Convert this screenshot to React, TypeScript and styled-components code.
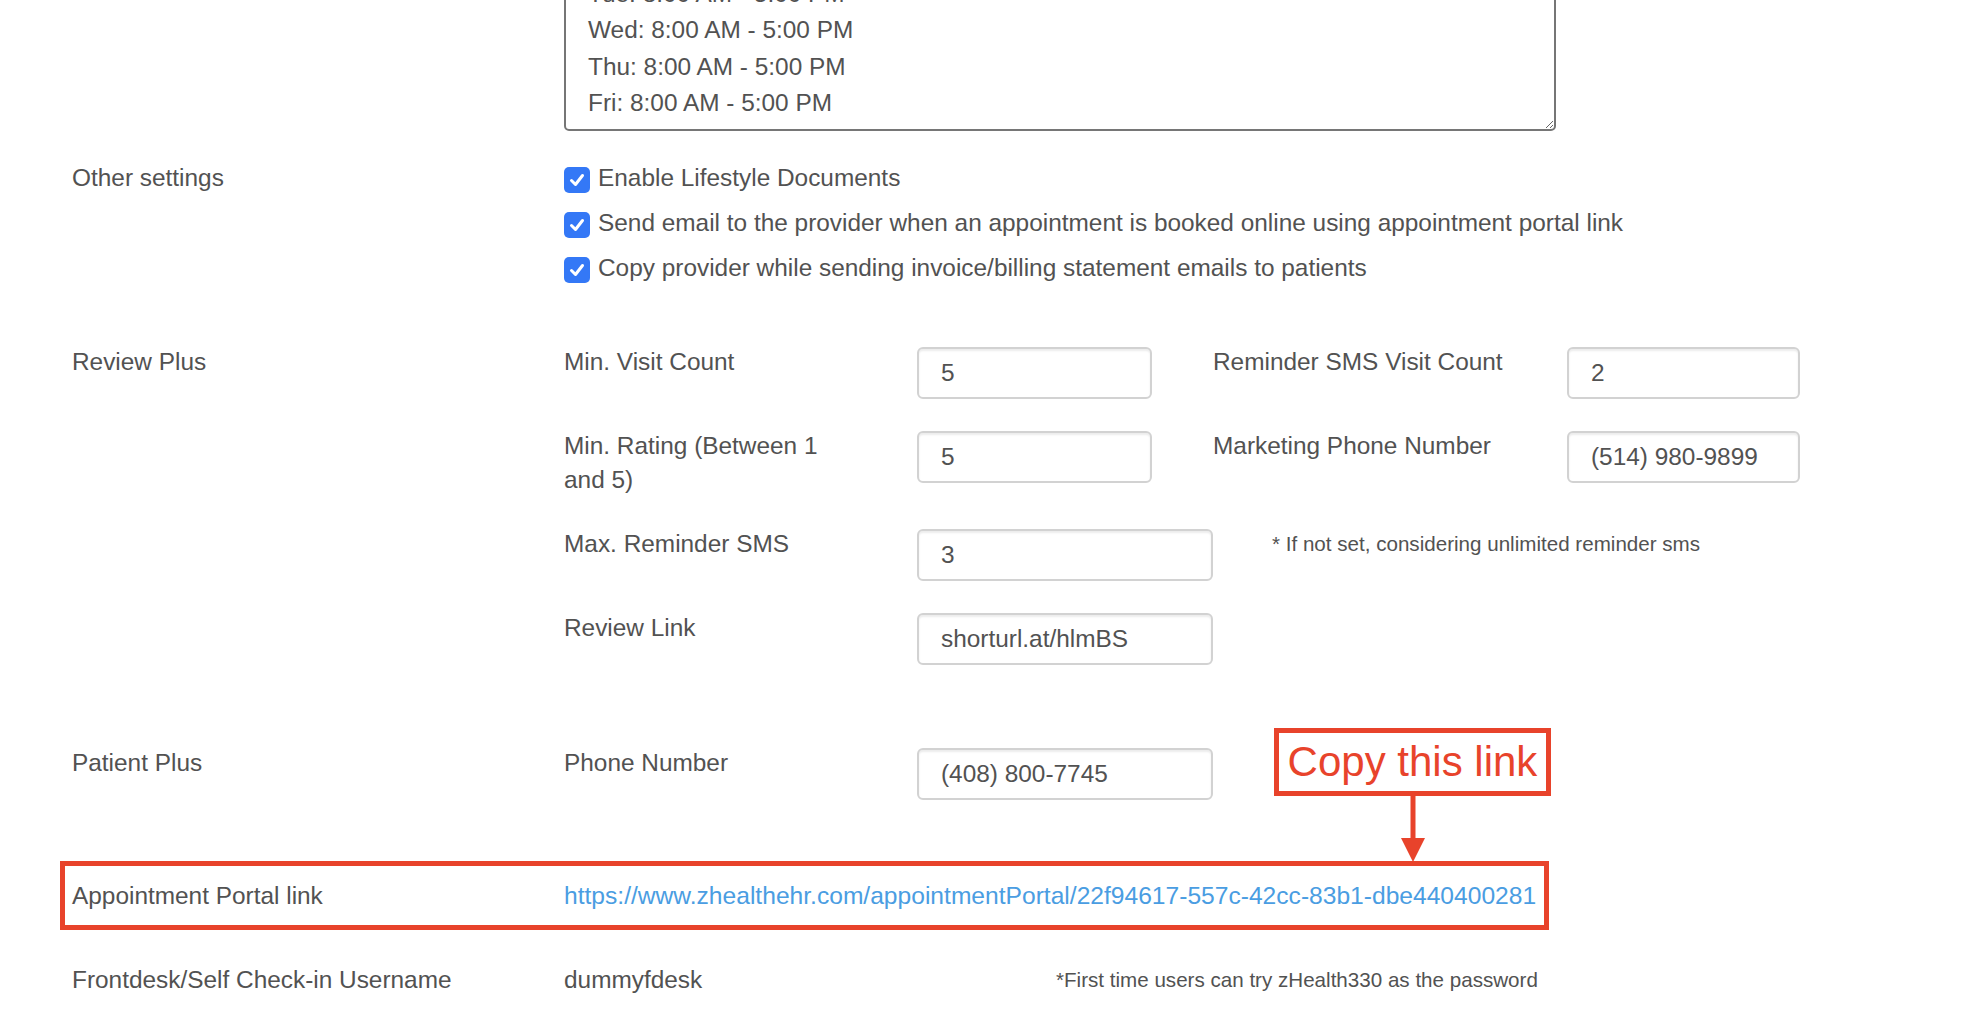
import styled, { createGlobalStyle } from "styled-components";

const RED = "#e8432b";
const TEXT = "#525252";

const GlobalStyle = createGlobalStyle`
  html, body {
    margin: 0;
    padding: 0;
    background: #ffffff;
  }
  body {
    font-family: "Liberation Sans", Arial, Helvetica, sans-serif;
    color: ${TEXT};
    overflow: hidden;
  }
`;

const Page = styled.main`
  display: flex;
  flex-direction: column;
  margin-top: -76px;
  padding-left: 72px;
`;

const Row = styled.section<{ $top?: number }>`
  display: grid;
  grid-template-columns: 492px 1fr;
  align-items: start;
  margin-top: ${(p) => p.$top ?? 0}px;
`;

const SectionLabel = styled.div`
  font-size: 24.4px;
  line-height: 34px;
  color: ${TEXT};
`;

const Hours = styled.textarea`
  box-sizing: border-box;
  display: block;
  width: 992px;
  height: 206.5px;
  padding: 13px 22px 7px;
  border: 2px solid #767676;
  border-radius: 5px;
  font-family: "Liberation Sans", Arial, sans-serif;
  font-size: 24.4px;
  line-height: 36.5px;
  color: ${TEXT};
  background: #fff;
  resize: vertical;
  overflow: hidden;
  outline: none;
`;

const CheckList = styled.div`
  display: flex;
  flex-direction: column;
  gap: 11px;
`;

const CheckItem = styled.label`
  display: flex;
  align-items: center;
  gap: 8px;
  font-size: 24.4px;
  line-height: 34px;
  color: ${TEXT};
  white-space: nowrap;
`;

const CheckBox = styled.span`
  display: inline-flex;
  align-items: center;
  justify-content: center;
  flex: none;
  width: 26px;
  height: 26px;
  margin-top: 4px;
  border-radius: 5px;
  background: #3478f6;
`;

const FieldGrid = styled.div`
  display: grid;
  grid-template-columns: 353px 296px 354px 233px;
  row-gap: 30px;
  align-items: start;
`;

const FieldLabel = styled.div`
  padding-right: 62px;
  font-size: 24.4px;
  line-height: 34px;
  color: ${TEXT};
`;

const Input = styled.input<{ $w: number }>`
  box-sizing: border-box;
  width: ${(p) => p.$w}px;
  height: 52px;
  margin: 2px 0 0;
  padding: 0 20px 0 22px;
  border: 2px solid #d2d2d2;
  border-radius: 6px;
  box-shadow: inset 0 2px 2px rgba(0, 0, 0, 0.08);
  font-family: "Liberation Sans", Arial, sans-serif;
  font-size: 24.4px;
  color: ${TEXT};
  background: #fff;
  outline: none;
`;

const Note = styled.div`
  grid-column: span 2;
  padding-left: 59px;
  font-size: 20.6px;
  line-height: 34px;
  color: ${TEXT};
  white-space: nowrap;
`;

const Annotated = styled.div`
  position: relative;
  margin-top: 81px;
`;

const Callout = styled.div`
  position: absolute;
  left: 1202px;
  top: -18px;
  z-index: 2;
  display: flex;
  flex-direction: column;
  align-items: center;
  width: 277px;
`;

const CalloutBox = styled.div`
  box-sizing: border-box;
  width: 277px;
  height: 68px;
  border: 5px solid ${RED};
  background: #fff;
  color: ${RED};
  font-size: 42px;
  line-height: 58px;
  text-align: center;
  white-space: nowrap;
`;

const HighlightRow = styled(Row)`
  box-sizing: border-box;
  width: 1489px;
  margin-left: -12px;
  padding: 13px 0 12px 7px;
  border: 5px solid ${RED};
`;

const PortalLink = styled.a`
  font-size: 24.6px;
  line-height: 34px;
  color: #4a9de2;
  text-decoration: none;
  white-space: nowrap;
`;

const ValueLine = styled.div`
  display: grid;
  grid-template-columns: 492px auto;
  align-items: start;
`;

const Value = styled.div`
  font-size: 24.4px;
  line-height: 34px;
  color: ${TEXT};
`;

const FootNote = styled.div`
  font-size: 20.6px;
  line-height: 34px;
  color: ${TEXT};
  white-space: nowrap;
`;

const hours = [
  "Mon: 8:00 AM - 5:00 PM",
  "Tue: 8:00 AM - 5:00 PM",
  "Wed: 8:00 AM - 5:00 PM",
  "Thu: 8:00 AM - 5:00 PM",
  "Fri: 8:00 AM - 5:00 PM",
].join("\n");

const settings = [
  "Enable Lifestyle Documents",
  "Send email to the provider when an appointment is booked online using appointment portal link",
  "Copy provider while sending invoice/billing statement emails to patients",
];

function Tick() {
  return (
    <svg width="18" height="18" viewBox="0 0 18 18">
      <polyline
        points="3.5,9.5 7.5,13.5 14.5,4.5"
        fill="none"
        stroke="#fff"
        strokeWidth="3"
        strokeLinecap="round"
        strokeLinejoin="round"
      />
    </svg>
  );
}

function Arrow() {
  return (
    <svg width="24" height="66" viewBox="0 0 24 66">
      <line x1="12" y1="0" x2="12" y2="46" stroke={RED} strokeWidth="5" />
      <polygon points="0,42 24,42 12,66" fill={RED} />
    </svg>
  );
}

export default function App() {
  return (
    <>
      <GlobalStyle />
      <Page>
        <Row>
          <SectionLabel />
          <Hours readOnly defaultValue={hours} />
        </Row>

        <Row $top={30}>
          <SectionLabel>Other settings</SectionLabel>
          <CheckList>
            {settings.map((s) => (
              <CheckItem key={s}>
                <CheckBox>
                  <Tick />
                </CheckBox>
                {s}
              </CheckItem>
            ))}
          </CheckList>
        </Row>

        <Row $top={60}>
          <SectionLabel>Review Plus</SectionLabel>
          <FieldGrid>
            <FieldLabel>Min. Visit Count</FieldLabel>
            <Input $w={235} readOnly value="5" />
            <FieldLabel>Reminder SMS Visit Count</FieldLabel>
            <Input $w={233} readOnly value="2" />

            <FieldLabel>Min. Rating (Between 1 and 5)</FieldLabel>
            <Input $w={235} readOnly value="5" />
            <FieldLabel>Marketing Phone Number</FieldLabel>
            <Input $w={233} readOnly value="(514) 980-9899" />

            <FieldLabel>Max. Reminder SMS</FieldLabel>
            <Input $w={296} readOnly value="3" />
            <Note>* If not set, considering unlimited reminder sms</Note>

            <FieldLabel>Review Link</FieldLabel>
            <Input $w={296} readOnly value="shorturl.at/hlmBS" />
          </FieldGrid>
        </Row>

        <Annotated>
          <Row>
            <SectionLabel>Patient Plus</SectionLabel>
            <FieldGrid>
              <FieldLabel>Phone Number</FieldLabel>
              <Input $w={296} readOnly value="(408) 800-7745" />
            </FieldGrid>
          </Row>

          <Callout>
            <CalloutBox>Copy this link</CalloutBox>
            <Arrow />
          </Callout>

          <HighlightRow $top={61}>
            <SectionLabel>Appointment Portal link</SectionLabel>
            <PortalLink href="#">
              https://www.zhealthehr.com/appointmentPortal/22f94617-557c-42cc-83b1-dbe440400281
            </PortalLink>
          </HighlightRow>
        </Annotated>

        <Row $top={33}>
          <SectionLabel>Frontdesk/Self Check-in Username</SectionLabel>
          <ValueLine>
            <Value>dummyfdesk</Value>
            <FootNote>*First time users can try zHealth330 as the password</FootNote>
          </ValueLine>
        </Row>
      </Page>
    </>
  );
}
